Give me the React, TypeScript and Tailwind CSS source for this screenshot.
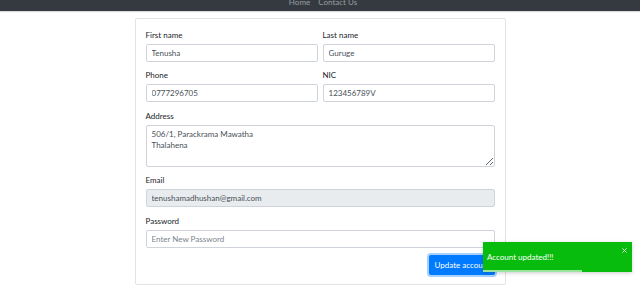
import { X } from 'lucide-react';

const font = { fontFamily: 'Lato, "Noto Sans", sans-serif' };

function Field({ label, value, disabled, placeholder }: { label: string; value?: string; disabled?: boolean; placeholder?: string }) {
    return (
        <div className="flex min-w-0 flex-1 flex-col">
            <label className="mb-[3px] h-[12px] text-[8px] leading-[12px] text-[#212529]">{label}</label>
            <input
                defaultValue={value}
                disabled={disabled}
                placeholder={placeholder}
                style={font}
                className={`h-[18px] w-full rounded-[2px] border border-[#ced4da] px-[5px] text-[8px] text-[#495057] outline-none placeholder:text-[#7b848b] ${disabled ? 'bg-[#e9ecef]' : 'bg-white'}`}
            />
        </div>
    );
}

export default function App() {
    return (
        <div className="relative h-[289px] w-[640px] overflow-hidden bg-white" style={font}>
            <nav className="flex h-[11px] justify-center gap-[8px] overflow-hidden bg-[#343a40] pl-[6px] shadow-[0_1px_1px_rgba(0,0,0,0.15)]">
                <span className="-mt-[2px] text-[8px] leading-[8px] text-[#9a9da0]">Home</span>
                <span className="-mt-[2px] text-[8px] leading-[8px] text-[#9a9da0]">Contact Us</span>
            </nav>

            <div className="mx-auto mt-[7px] w-[371px] rounded-[2px] border border-[#e3e3e3] px-[10px] pt-[10px] pb-[9px]">
                <div className="mb-[7px] flex gap-[5px]">
                    <Field label="First name" value="Tenusha" />
                    <Field label="Last name" value="Guruge" />
                </div>
                <div className="mb-[8px] flex gap-[5px]">
                    <Field label="Phone" value="0777296705" />
                    <Field label="NIC" value="123456789V" />
                </div>
                <div className="mb-[7px] flex flex-col">
                    <label className="mb-[3px] h-[12px] text-[8px] leading-[12px] text-[#212529]">Address</label>
                    <textarea
                        defaultValue={'506/1, Parackrama Mawatha\nThalahena'}
                        style={font}
                        className="h-[42px] w-full rounded-[2px] border border-[#ced4da] px-[5px] py-[3px] text-[8px] leading-[11px] text-[#495057] outline-none"
                    />
                </div>
                <div className="mb-[8px] flex">
                    <Field label="Email" value="tenushamadhushan@gmail.com" disabled />
                </div>
                <div className="mb-[7px] flex">
                    <Field label="Password" placeholder="Enter New Password" />
                </div>
                <div className="flex justify-end">
                    <button className="h-[20px] w-[66px] overflow-hidden whitespace-nowrap rounded-[2px] bg-[#007bff] px-[6px] text-left text-[8px] text-white shadow-[0_0_0_2px_rgba(0,123,255,0.35)]">
                        Update account
                    </button>
                </div>
            </div>

            <div className="absolute top-[242px] left-[483px] flex h-[30px] w-[149px] items-center overflow-hidden bg-[#07bc0c] pl-[4px] shadow-[0_1px_4px_rgba(0,0,0,0.2)]">
                <span className="text-[8px] text-white">Account updated!!!</span>
                <X className="absolute top-[5px] right-[4px] h-[7px] w-[7px] text-white" strokeWidth={3} />
                <div className="absolute bottom-0 left-0 h-[2px] w-[99px] bg-white/60" />
            </div>
        </div>
    );
}
